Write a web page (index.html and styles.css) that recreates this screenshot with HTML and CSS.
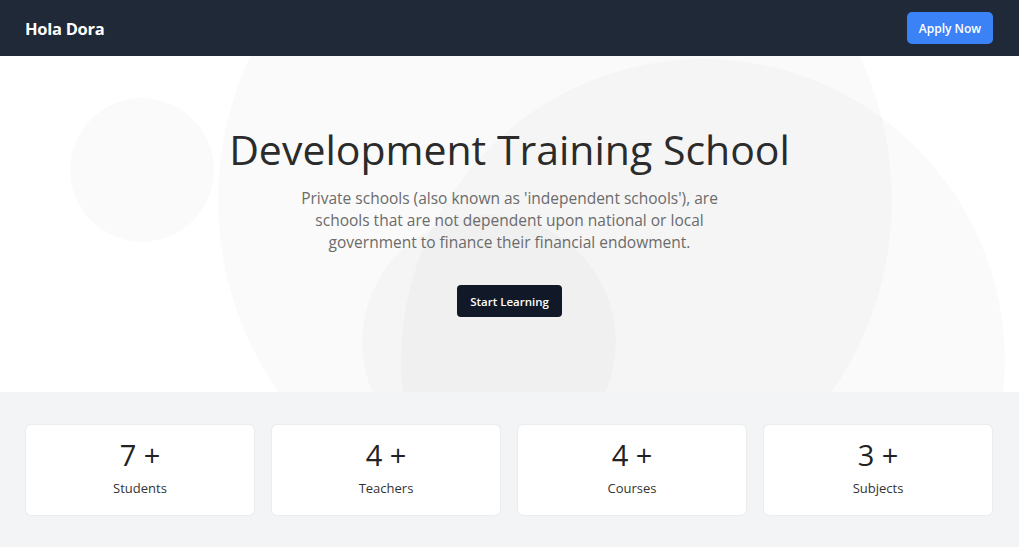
FILE: index.html
```html
<!DOCTYPE html>
<html lang="en">
<head>
<meta charset="utf-8">
<title>Hola Dora</title>
<link rel="stylesheet" href="styles.css">
</head>
<body>
<header class="nav">
  <div class="logo">Hola Dora</div>
  <a class="apply" href="#">Apply Now</a>
</header>
<section class="hero">
  <div class="blob blob-a"></div>
  <div class="blob blob-b"></div>
  <div class="blob blob-c"></div>
  <div class="blob blob-d"></div>
  <div class="hero-inner">
    <h1 class="title">Development Training School</h1>
    <p class="lead">Private schools (also known as 'independent schools'), are schools that are not dependent upon national or local government to finance their financial endowment.</p>
    <a class="start" href="#">Start Learning</a>
  </div>
</section>
<section class="stats">
  <div class="card"><div class="num">7 +</div><div class="label">Students</div></div>
  <div class="card"><div class="num">4 +</div><div class="label">Teachers</div></div>
  <div class="card"><div class="num">4 +</div><div class="label">Courses</div></div>
  <div class="card"><div class="num">3 +</div><div class="label">Subjects</div></div>
</section>
</body>
</html>
```
FILE: styles.css
```css
* { box-sizing: border-box; }
html, body { margin: 0; padding: 0; }
html { background: #fff; }
body {
  font-family: "Open Sans", "Noto Sans", sans-serif;
  color: #333;
  background: #fff;
  width: 1019px;
  overflow: hidden;
}
.nav {
  height: 56px;
  background: #1f2937;
  display: flex;
  align-items: center;
  justify-content: space-between;
  padding: 0 26px 0 25px;
}
.logo {
  color: #fff;
  font-weight: 700;
  font-size: 16.5px;
  letter-spacing: -0.3px;
}
.apply {
  display: inline-flex;
  align-items: center;
  justify-content: center;
  width: 86px;
  height: 32px;
  background: #3b82f6;
  color: #fff;
  border-radius: 5px;
  font-size: 12px;
  font-weight: 600;
  text-decoration: none;
}
.hero {
  position: relative;
  height: 336px;
  overflow: hidden;
  background: #fff;
}
.blob {
  position: absolute;
  border-radius: 50%;
  background: rgba(0,0,0,0.02);
}
.blob-a { left: 70px; top: 42px; width: 144px; height: 144px; }
.blob-b { left: 218px; top: -193px; width: 674px; height: 674px; }
.blob-c { left: 401px; top: 3px; width: 604px; height: 604px; }
.blob-d { left: 362px; top: 159px; width: 254px; height: 254px; }
.hero-inner {
  position: relative;
  display: flex;
  flex-direction: column;
  align-items: center;
  padding-top: 69px;
}
.title {
  margin: 0;
  font-size: 41px;
  font-weight: 400;
  color: #2b2b2b;
  line-height: 48px;
}
.lead {
  margin: 14px 0 0;
  width: 450px;
  text-align: center;
  font-size: 15.5px;
  line-height: 22px;
  color: #6b6b6b;
}
.start {
  margin-top: 32px;
  display: inline-flex;
  align-items: center;
  justify-content: center;
  width: 105px;
  height: 32px;
  background: #111827;
  color: #fff;
  border-radius: 4px;
  font-size: 11.5px;
  font-weight: 600;
  text-decoration: none;
}
.stats {
  background: #f3f4f6;
  height: 155px;
  padding: 33px 27px 0 26px;
  display: grid;
  grid-template-columns: repeat(4, 1fr);
  gap: 18px;
  align-items: start;
}
.card {
  background: #fff;
  height: 90px;
  border-radius: 5px;
  box-shadow: 0 0 2px rgba(0,0,0,0.12);
  display: flex;
  flex-direction: column;
  align-items: center;
  padding-top: 12px;
}
.num {
  font-size: 29px;
  line-height: 36px;
  color: #222;
}
.label {
  margin-top: 6px;
  font-size: 13px;
  color: #333;
}
```
